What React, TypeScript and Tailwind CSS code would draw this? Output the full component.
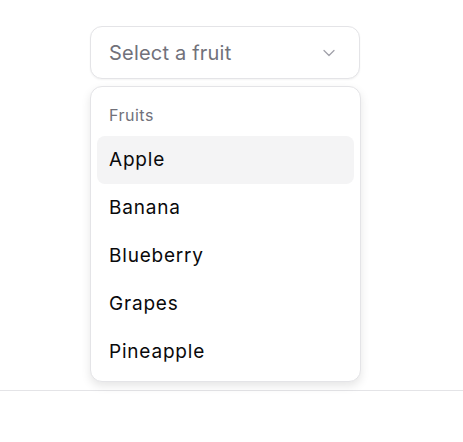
import React from 'react';
import { ChevronDown } from 'lucide-react';

const fruits = ['Apple', 'Banana', 'Blueberry', 'Grapes', 'Pineapple'];

export default function App() {
  return (
    <div className="min-h-screen bg-white font-['Inter',sans-serif]">
      <div className="h-[391px] bg-white border-b border-[#e4e4e7] pl-[90px] pt-[26px]">
        <div className="relative w-[270px]">
          <button className="w-full h-[53px] flex items-center justify-between rounded-[12px] border border-[#e4e4e7] bg-white pl-[18px] pr-[20px] shadow-[0_1px_2px_rgba(0,0,0,0.05)]">
            <span className="text-[20px] text-[#71717a] tracking-[0.2px]">Select a fruit</span>
            <ChevronDown className="w-[20px] h-[20px] text-[#a1a1aa]" strokeWidth={1.5} />
          </button>
          <div className="absolute left-0 top-[60px] w-[271px] rounded-[12px] border border-[#e4e4e7] bg-white px-[6px] pt-[6px] pb-[5px] shadow-[0_4px_10px_rgba(0,0,0,0.1)]">
            <div className="px-[12px] pt-[10px] pb-[9px] text-[16px] text-[#71717a] tracking-[0.5px]">Fruits</div>
            {fruits.map((f, i) => (
              <div
                key={f}
                className={
                  i === 0
                    ? 'h-[48px] flex items-center px-[12px] rounded-[8px] bg-[#f4f4f5] text-[19px] text-[#09090b] tracking-[0.8px]'
                    : 'h-[48px] flex items-center px-[12px] rounded-[8px] text-[19px] text-[#09090b] tracking-[0.8px]'
                }
              >
                {f}
              </div>
            ))}
          </div>
        </div>
      </div>
    </div>
  );
}
